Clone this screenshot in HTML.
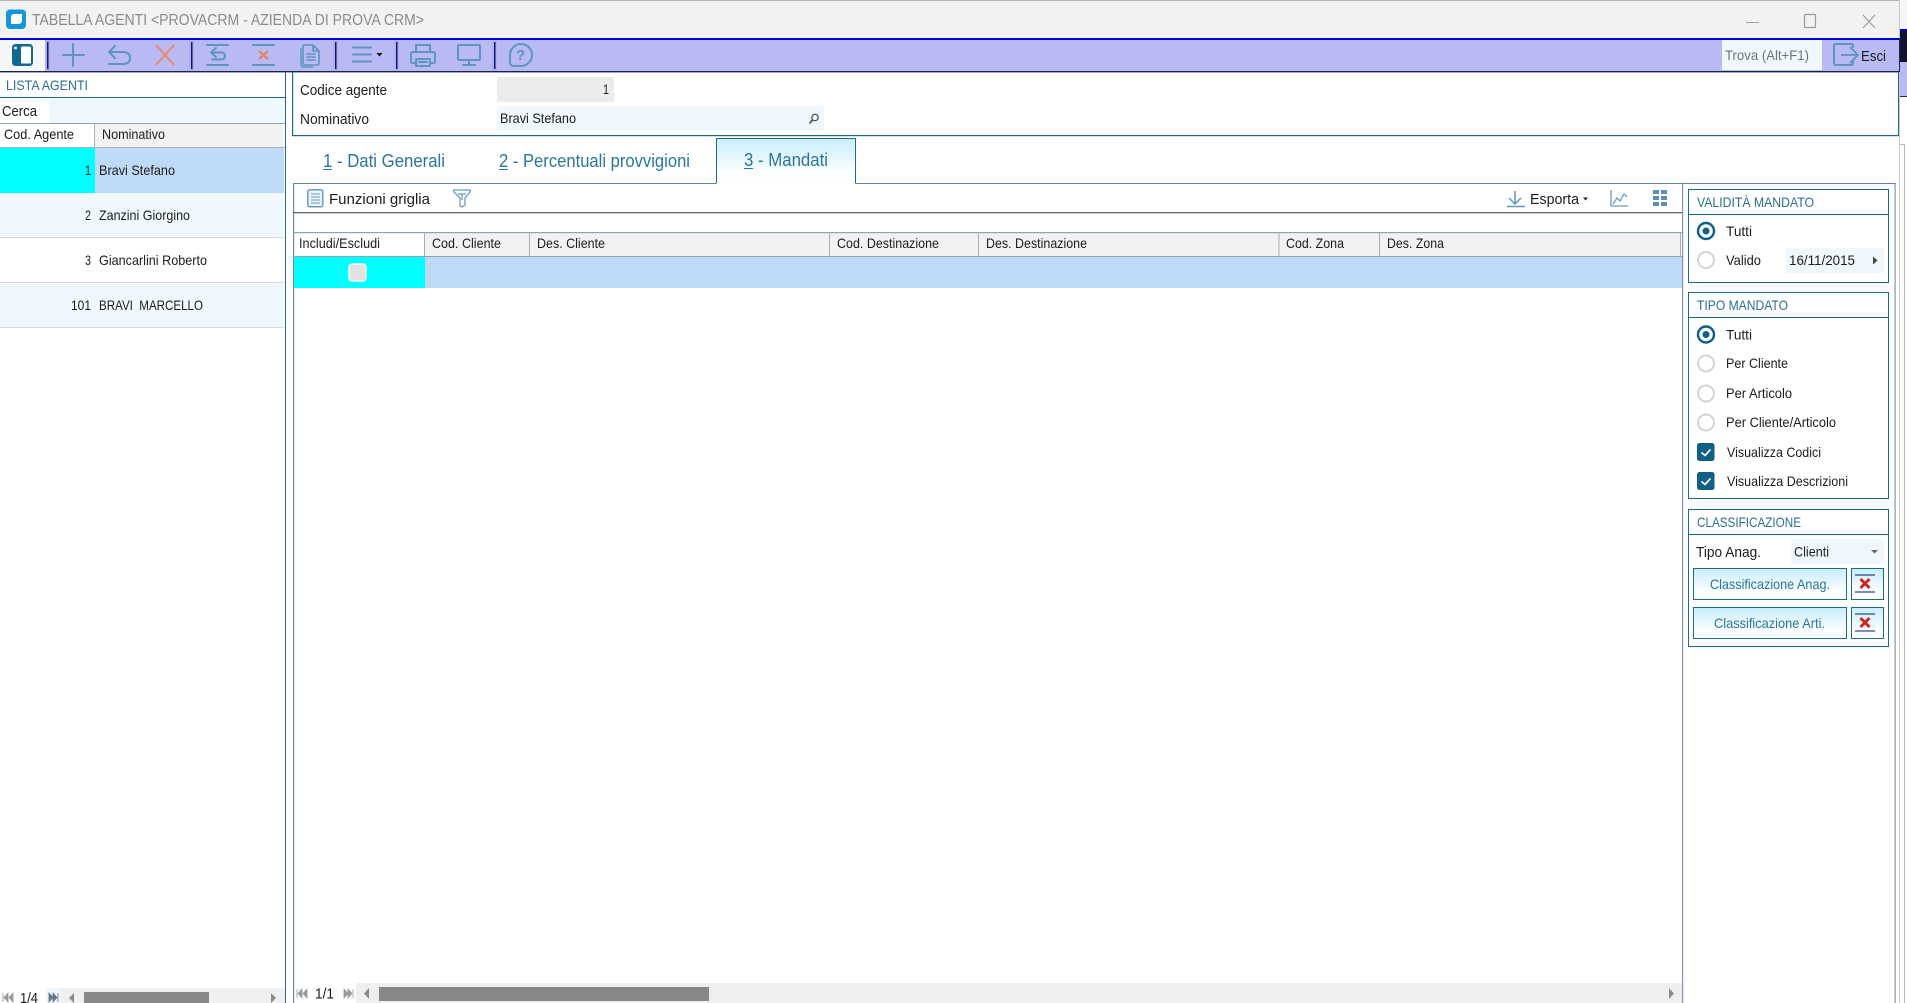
<!DOCTYPE html>
<html><head><meta charset="utf-8"><title>Tabella Agenti</title>
<style>
html,body{margin:0;padding:0;background:#fff;width:1907px;height:1003px;overflow:hidden}
svg{display:block}
text{font-family:"Liberation Sans",sans-serif;font-size:14px;fill:#1c1c1c;white-space:pre}
.b{font-size:15px}
.h{font-size:14px;fill:#2a6f90}
.t{font-size:18px;fill:#2a7797}
.i{fill:none;stroke:#5c95bd;stroke-width:2;stroke-linecap:round;stroke-linejoin:round}
.o{fill:none;stroke:#5c8fb0;stroke-width:1.6;stroke-linecap:round;stroke-linejoin:round}
.r0{fill:#fff;stroke:#d4d4d4;stroke-width:2}
.r1{fill:#fff;stroke:#0f5f86;stroke-width:2.4}
</style></head><body>
<svg xmlns="http://www.w3.org/2000/svg" width="1907" height="1003" viewBox="0 0 1907 1003" shape-rendering="geometricPrecision">
<defs><linearGradient id="g" x1="0" y1="0" x2="0" y2="1"><stop offset="0" stop-color="#c8edfc"/><stop offset=".75" stop-color="#fcfeff"/><stop offset="1" stop-color="#fff"/></linearGradient></defs>
<rect width="1907" height="1003" fill="#fff"/>

<!-- window behind, right strip -->
<rect x="1900" y="0" width="7" height="29" fill="#f6f6f6"/>
<rect x="1900" y="29" width="7" height="2" fill="#0000c8"/>
<rect x="1900" y="31" width="7" height="31" fill="#12122e"/>
<rect x="1900" y="62" width="7" height="34" fill="#b9b9f4"/>
<rect x="1900" y="96" width="7" height="1" fill="#1c2c50"/>
<rect x="1899" y="144" width="5" height="859" fill="#fff"/>
<rect x="1904" y="144" width="1" height="859" fill="#b4bcc8"/>
<rect x="1899" y="144" width="5" height="1" fill="#b4bcc8"/>
<rect x="1899" y="0" width="1" height="1003" fill="#c8c8c8"/>

<!-- title bar -->
<rect x="0" y="1" width="1899" height="37" fill="#f2f2f2"/>
<rect x="0" y="0" width="1899" height="1" fill="#b4b4b4"/>
<rect x="6" y="9.500" width="20" height="19.500" rx="4" fill="#1595d8"/>
<path d="M14 14h8v6q0 4-4 4h-7v-6q0-4 3-4z" fill="#fff"/>
<text x="32" y="25" textLength="392" lengthAdjust="spacingAndGlyphs" style="font-size:16px;fill:#8b8b8b">TABELLA AGENTI &lt;PROVACRM - AZIENDA DI PROVA CRM&gt;</text>
<rect x="1746" y="22" width="13" height="1" fill="#a2a2a2"/>
<rect x="1804.500" y="14.500" width="11" height="13" rx="1" fill="none" stroke="#9a9a9a" stroke-width="1.200"/>
<path d="M1863 15l12 13M1875 15l-12 13" stroke="#9a9a9a" stroke-width="1.100" fill="none"/>

<!-- toolbar -->
<rect x="0" y="38" width="1899" height="2" fill="#0000d8"/>
<rect x="0" y="40" width="1899" height="31" fill="#b9b9f4"/>
<rect x="0" y="71" width="1899" height="1.400" fill="#14264e"/>
<rect x="0" y="40" width="45" height="31" fill="#f6f6f9"/>
<rect x="12" y="44" width="21" height="22" rx="3.500" fill="#0f6a8f"/>
<rect x="21" y="46.500" width="10" height="17" rx="1" fill="#fff"/>
<circle cx="15.500" cy="48" r="1.400" fill="#fff"/>
<rect x="45" y="40" width="5" height="31" fill="#b0b0ea"/><rect x="47" y="42" width="1.500" height="27" fill="#14147e"/>
<rect x="189" y="40" width="5" height="31" fill="#b0b0ea"/><rect x="191" y="42" width="1.500" height="27" fill="#14147e"/>
<rect x="333" y="40" width="5" height="31" fill="#b0b0ea"/><rect x="335" y="42" width="1.500" height="27" fill="#14147e"/>
<rect x="394" y="40" width="5" height="31" fill="#b0b0ea"/><rect x="396" y="42" width="1.500" height="27" fill="#14147e"/>
<rect x="492" y="40" width="5" height="31" fill="#b0b0ea"/><rect x="494" y="42" width="1.500" height="27" fill="#14147e"/>
<path class="i" d="M73 44v22M63 55h21"/>
<path class="i" d="M115 46l-6 6 6 6M109 52h14q7 0 7 6t-7 6h-14"/>
<path d="M156 45l18 20M174 45l-18 20" fill="none" stroke="#e8896c" stroke-width="2"/>
<path class="i" d="M207 45h21M207 65h21M216 48l-5 4.500 5 4.500M211 52.500h10q4 0 4 3.500t-4 3.500h-9"/>
<path class="i" d="M253 45h21M253 65h21"/>
<path d="M259 51l9 8M268 51l-9 8" fill="none" stroke="#e8805c" stroke-width="2"/>
<path class="i" d="M304 45h9l6 6v12q0 2-2 2h-12q-2 0-2-2v-17q0-1 1-1zM313 45v6h6M307 54h8M307 57h8M307 60h8" style="stroke-width:1.600"/>
<path d="M301 48v16q0 3 3 3h9" fill="none" stroke="#5c95bd" stroke-width="1.400"/>
<path class="i" d="M353 47.500h18M353 54.500h18M353 61.500h18"/>
<path d="M376.500 53h6l-3 3.500z" fill="#111"/>
<path class="i" d="M416 52v-7h14v7M415 63h-2q-2 0-2-2v-7q0-2 2-2h20q2 0 2 2v7q0 2-2 2h-2M416 59h14v7h-14zM419 62h8"/>
<path class="i" d="M459 45h20q1 0 1 1v13q0 1-1 1h-20q-1 0-1-1v-13q0-1 1-1zM469 60v4M463 65h12"/>
<path class="i" d="M521 44a11 11 0 0 1 0 22h-7q-4 0-4-4v-7a11 11 0 0 1 11-11z"/>
<text x="516" y="60" style="font-size:15px;font-weight:bold;fill:#5c95bd">?</text>
<rect x="1722" y="40" width="100" height="30" fill="#f1f8fd"/>
<text x="1725" y="60" textLength="84" lengthAdjust="spacingAndGlyphs" style="fill:#6e7378">Trova (Alt+F1)</text>
<path d="M1853 48v-2q0-2-2-2h-15q-2 0-2 2v17q0 2 2 2h15q2 0 2-2v-2" fill="none" stroke="#5c95bd" stroke-width="2"/>
<path d="M1841 55h16M1850 47l8 8-8 8" fill="none" stroke="#5c95bd" stroke-width="1.800"/>
<text x="1861" y="61" textLength="25" lengthAdjust="spacingAndGlyphs" class="b">Esci</text>
<rect x="1899" y="38" width="1" height="34" fill="#14264e"/>

<!-- left panel -->
<rect x="285" y="72" width="1" height="931" fill="#1f6a85"/>
<text x="6" y="90" textLength="82" lengthAdjust="spacingAndGlyphs" class="h">LISTA AGENTI</text>
<rect x="0" y="97" width="285" height="1" fill="#1f6a85"/>
<text x="2" y="116" textLength="35" lengthAdjust="spacingAndGlyphs" class="b">Cerca</text>
<rect x="50" y="98" width="235" height="25" fill="#f1f8fd"/>
<rect x="0" y="123" width="285" height="1" fill="#8fa4b5"/>
<rect x="95" y="124" width="189" height="23" fill="#f2f2f2"/>
<rect x="94" y="124" width="1" height="23" fill="#a6b4c0"/>
<rect x="0" y="147" width="285" height="1" fill="#a6b4c0"/>
<text x="4" y="139" textLength="70" lengthAdjust="spacingAndGlyphs">Cod. Agente</text>
<text x="102" y="139" textLength="63" lengthAdjust="spacingAndGlyphs">Nominativo</text>
<rect x="0" y="148" width="95" height="45" fill="#00ffff"/>
<rect x="95" y="148" width="189" height="45" fill="#bfdaf7"/>
<rect x="0" y="193" width="284" height="44" fill="#f1f8fd"/>
<rect x="0" y="237" width="284" height="1" fill="#d6dde2"/>
<rect x="0" y="282" width="284" height="1" fill="#d6dde2"/>
<rect x="0" y="283" width="284" height="44" fill="#f1f8fd"/>
<rect x="0" y="327" width="284" height="1" fill="#d6dde2"/>
<text x="85" y="175" textLength="6" lengthAdjust="spacingAndGlyphs">1</text>
<text x="99" y="175" textLength="76" lengthAdjust="spacingAndGlyphs">Bravi Stefano</text>
<text x="85" y="220" textLength="6" lengthAdjust="spacingAndGlyphs">2</text>
<text x="99" y="220" textLength="91" lengthAdjust="spacingAndGlyphs">Zanzini Giorgino</text>
<text x="85" y="265" textLength="6" lengthAdjust="spacingAndGlyphs">3</text>
<text x="99" y="265" textLength="108" lengthAdjust="spacingAndGlyphs">Giancarlini Roberto</text>
<text x="71" y="310" textLength="20" lengthAdjust="spacingAndGlyphs">101</text>
<text x="99" y="310" textLength="104" lengthAdjust="spacingAndGlyphs">BRAVI  MARCELLO</text>
<!-- left footer -->
<rect x="46" y="988" width="239" height="15" fill="#f0f0f0"/>
<rect x="46" y="988" width="15" height="15" fill="#eef6fb"/>
<rect x="84" y="992" width="125" height="11" fill="#888"/>
<path d="M3 993v9M8 993l-4 4.500 4 4.500zM13 993l-4 4.500 4 4.500z" fill="#9a9a9a" stroke="#9a9a9a" stroke-width=".8"/>
<path d="M49 993l4 4.500-4 4.500zM53 993l4 4.500-4 4.500zM58 993v9" fill="#62798c" stroke="#62798c" stroke-width=".8"/>
<text x="20" y="1003" textLength="18" lengthAdjust="spacingAndGlyphs" class="b">1/4</text>
<path d="M74 993l-5 5 5 5zM271 993l5 5-5 5z" fill="#8a8a8a"/>

<!-- form box -->
<rect x="292" y="72" width="1.200" height="64" fill="#1f6a85"/>
<rect x="292" y="135" width="1607" height="1.200" fill="#1f6a85"/>
<rect x="1898" y="72" width="1" height="64" fill="#1f6a85"/>
<text x="300" y="95" textLength="87" lengthAdjust="spacingAndGlyphs" class="b">Codice agente</text>
<rect x="497" y="77" width="117" height="25" fill="#ececec"/>
<text x="603" y="94" textLength="6" lengthAdjust="spacingAndGlyphs">1</text>
<text x="300" y="124" textLength="69" lengthAdjust="spacingAndGlyphs" class="b">Nominativo</text>
<rect x="497" y="106" width="327" height="25" fill="#f1f8fd"/>
<text x="500" y="123" textLength="76" lengthAdjust="spacingAndGlyphs">Bravi Stefano</text>
<circle cx="815" cy="117.500" r="3.200" fill="none" stroke="#444" stroke-width="1.200"/>
<path d="M812.500 120l-3 3.500" stroke="#444" stroke-width="1.600" fill="none"/>

<!-- tabs -->
<text x="323" y="167" textLength="122" lengthAdjust="spacingAndGlyphs" class="t">1 - Dati Generali</text>
<rect x="323" y="169" width="9" height="1" fill="#2a7797"/>
<text x="499" y="167" textLength="191" lengthAdjust="spacingAndGlyphs" class="t">2 - Percentuali provvigioni</text>
<rect x="499" y="169" width="9" height="1" fill="#2a7797"/>
<rect x="716.500" y="138.500" width="139" height="45" fill="url(#g)"/>
<path d="M716.500 183.500v-45h139v45" fill="none" stroke="#1f6a85" stroke-width="1"/>
<text x="744" y="166" textLength="84" lengthAdjust="spacingAndGlyphs" class="t">3 - Mandati</text>
<rect x="744" y="168" width="9" height="1" fill="#2a7797"/>
<rect x="293" y="183" width="423" height="1" fill="#667f92"/>
<rect x="856" y="183" width="1040" height="1" fill="#667f92"/>

<!-- grid panel -->
<rect x="293" y="183" width="1.200" height="820" fill="#6f8aa0"/>
<rect x="1682" y="183" width="1.200" height="820" fill="#8597ab"/>
<rect x="1894.500" y="183" width="1.200" height="820" fill="#8597ab"/>
<rect x="293" y="212" width="1389" height="1.300" fill="#5c686e"/>
<rect x="307.800" y="189.800" width="15" height="17" rx="2" fill="#eaf3f9" stroke="#6a9cc0" stroke-width="1.500"/>
<path d="M311 194h9M311 197h9M311 200h9M311 203h9" stroke="#6a9cc0" stroke-width="1.100" fill="none"/>
<text x="329" y="204" textLength="101" lengthAdjust="spacingAndGlyphs" class="b">Funzioni griglia</text>
<path d="M454 190h16q1 0 0 2l-5 6v7l-3 2-2-1v-8l-6-6q-1-2 0-2zM458 194h8M462 194v6" fill="none" stroke="#6a9cc0" stroke-width="1.300"/>
<path d="M1515 191v13M1509 198l6 6 6-6M1507 206.500h18" fill="none" stroke="#5c95bd" stroke-width="1.500"/>
<text x="1530" y="204" textLength="49" lengthAdjust="spacingAndGlyphs" class="b">Esporta</text>
<path d="M1583 197.500h5l-2.500 3z" fill="#222"/>
<path d="M1611 190v16h17M1613 204l4-6 3 3 4-7 3 3" fill="none" stroke="#6a9cc0" stroke-width="1.300"/>
<path d="M1653 190h6v4h-6zM1661 190h6v4h-6zM1653 196h6v4h-6zM1661 196h6v4h-6zM1653 202h6v4h-6zM1661 202h6v4h-6z" fill="#5c8fb0"/>

<rect x="425" y="233" width="1255" height="24" fill="#f2f2f2"/>
<rect x="293" y="232" width="1389" height="1.200" fill="#8fa4b5"/>
<rect x="293" y="256" width="1389" height="1.200" fill="#8fa4b5"/>
<g fill="#9fb0be">
<rect x="424" y="233" width="1" height="23"/><rect x="529" y="233" width="1" height="23"/><rect x="829" y="233" width="1" height="23"/><rect x="978" y="233" width="1" height="23"/><rect x="1278.500" y="233" width="1" height="23"/><rect x="1379" y="233" width="1" height="23"/><rect x="1680" y="233" width="1" height="23"/>
</g>
<text x="299" y="248" textLength="81" lengthAdjust="spacingAndGlyphs">Includi/Escludi</text>
<text x="432" y="248" textLength="69" lengthAdjust="spacingAndGlyphs">Cod. Cliente</text>
<text x="537" y="248" textLength="68" lengthAdjust="spacingAndGlyphs">Des. Cliente</text>
<text x="837" y="248" textLength="102" lengthAdjust="spacingAndGlyphs">Cod. Destinazione</text>
<text x="986" y="248" textLength="101" lengthAdjust="spacingAndGlyphs">Des. Destinazione</text>
<text x="1286" y="248" textLength="58" lengthAdjust="spacingAndGlyphs">Cod. Zona</text>
<text x="1387" y="248" textLength="57" lengthAdjust="spacingAndGlyphs">Des. Zona</text>
<rect x="294" y="257" width="131" height="31" fill="#00ffff"/>
<rect x="425" y="257" width="1257" height="31" fill="#bfdaf7"/>
<rect x="349" y="264" width="17" height="17" rx="3" fill="#e2e2e2" stroke="#f4fbfb" stroke-width="1.500"/>

<!-- grid footer -->
<rect x="356" y="983" width="1326" height="20" fill="#efefef"/>
<rect x="379" y="987" width="330" height="14" fill="#888"/>
<path d="M297 989v9M302 989l-4 4.500 4 4.500zM307 989l-4 4.500 4 4.500z" fill="#9a9a9a" stroke="#9a9a9a" stroke-width=".8"/>
<path d="M344 989l4 4.500-4 4.500zM348 989l4 4.500-4 4.500zM353 989v9" fill="#9a9a9a" stroke="#9a9a9a" stroke-width=".8"/>
<text x="315" y="998.500" textLength="19" lengthAdjust="spacingAndGlyphs" class="b">1/1</text>
<path d="M369 988l-5 5.500 5 5.500zM1669 988l5 5.500-5 5.500z" fill="#8a8a8a"/>

<!-- Validità -->
<rect x="1688.500" y="189.500" width="200" height="93" fill="#fff" stroke="#1f6a85"/>
<rect x="1688" y="214" width="201" height="1" fill="#1f6a85"/>
<text x="1697" y="207" textLength="117" lengthAdjust="spacingAndGlyphs" class="h">VALIDITÀ MANDATO</text>
<circle class="r1" cx="1706" cy="231" r="8"/><circle cx="1706" cy="231" r="3.500" fill="#0f5f86"/>
<text x="1726" y="236" textLength="26" lengthAdjust="spacingAndGlyphs">Tutti</text>
<circle class="r0" cx="1706" cy="260" r="8"/>
<text x="1726" y="265" textLength="35" lengthAdjust="spacingAndGlyphs">Valido</text>
<rect x="1786" y="248" width="98" height="25" fill="#f1f8fd"/>
<text x="1789" y="265" textLength="66" lengthAdjust="spacingAndGlyphs">16/11/2015</text>
<path d="M1873 256.500l4.500 4-4.500 4z" fill="#444"/>

<!-- Tipo mandato -->
<rect x="1688.500" y="292.500" width="200" height="206" fill="#fff" stroke="#1f6a85"/>
<rect x="1688" y="317" width="201" height="1" fill="#1f6a85"/>
<text x="1697" y="310" textLength="91" lengthAdjust="spacingAndGlyphs" class="h">TIPO MANDATO</text>
<circle class="r1" cx="1706" cy="334.500" r="8"/><circle cx="1706" cy="334.500" r="3.500" fill="#0f5f86"/>
<text x="1726" y="339.500" textLength="26" lengthAdjust="spacingAndGlyphs">Tutti</text>
<circle class="r0" cx="1706" cy="363.500" r="8"/>
<text x="1726" y="368" textLength="62" lengthAdjust="spacingAndGlyphs">Per Cliente</text>
<circle class="r0" cx="1706" cy="393.500" r="8"/>
<text x="1726" y="398" textLength="66" lengthAdjust="spacingAndGlyphs">Per Articolo</text>
<circle class="r0" cx="1706" cy="422.500" r="8"/>
<text x="1726" y="427" textLength="110" lengthAdjust="spacingAndGlyphs">Per Cliente/Articolo</text>
<rect x="1697" y="443" width="17.500" height="18" rx="2.500" fill="#0f5f86"/>
<path d="M1701.500 452.500l3.500 3 5.500-6" fill="none" stroke="#fff" stroke-width="1.700"/>
<text x="1727" y="457" textLength="94" lengthAdjust="spacingAndGlyphs">Visualizza Codici</text>
<rect x="1697" y="472" width="17.500" height="18" rx="2.500" fill="#0f5f86"/>
<path d="M1701.500 481.500l3.500 3 5.500-6" fill="none" stroke="#fff" stroke-width="1.700"/>
<text x="1727" y="486" textLength="121" lengthAdjust="spacingAndGlyphs">Visualizza Descrizioni</text>

<!-- Classificazione -->
<rect x="1688.500" y="509.500" width="200" height="137" fill="#fff" stroke="#1f6a85"/>
<rect x="1688" y="534" width="201" height="1" fill="#1f6a85"/>
<text x="1697" y="527" textLength="104" lengthAdjust="spacingAndGlyphs" class="h">CLASSIFICAZIONE</text>
<text x="1696" y="557" textLength="65" lengthAdjust="spacingAndGlyphs" class="b">Tipo Anag.</text>
<rect x="1791" y="539" width="93" height="25" fill="#f1f8fd"/>
<text x="1794" y="556.500" textLength="35" lengthAdjust="spacingAndGlyphs">Clienti</text>
<path d="M1871 550h7l-3.500 3.500z" fill="#666"/>
<rect x="1693.500" y="568.500" width="153" height="31" fill="url(#g)" stroke="#1f6a85"/>
<text x="1710" y="589" textLength="120" lengthAdjust="spacingAndGlyphs" style="fill:#2a7797">Classificazione Anag.</text>
<rect x="1851.500" y="568.500" width="32" height="31" fill="url(#g)" stroke="#1f6a85"/>
<path d="M1855 575h20M1855 592h20" stroke="#2c4a8c" stroke-width="1.200"/>
<path d="M1860.500 579l9 9M1869.500 579l-9 9" stroke="#c8281e" stroke-width="3"/>
<rect x="1693.500" y="607.500" width="153" height="31" fill="url(#g)" stroke="#1f6a85"/>
<text x="1714" y="628" textLength="111" lengthAdjust="spacingAndGlyphs" style="fill:#2a7797">Classificazione Arti.</text>
<rect x="1851.500" y="607.500" width="32" height="31" fill="url(#g)" stroke="#1f6a85"/>
<path d="M1855 614h20M1855 631h20" stroke="#2c4a8c" stroke-width="1.200"/>
<path d="M1860.500 618l9 9M1869.500 618l-9 9" stroke="#c8281e" stroke-width="3"/>
</svg>
</body></html>
